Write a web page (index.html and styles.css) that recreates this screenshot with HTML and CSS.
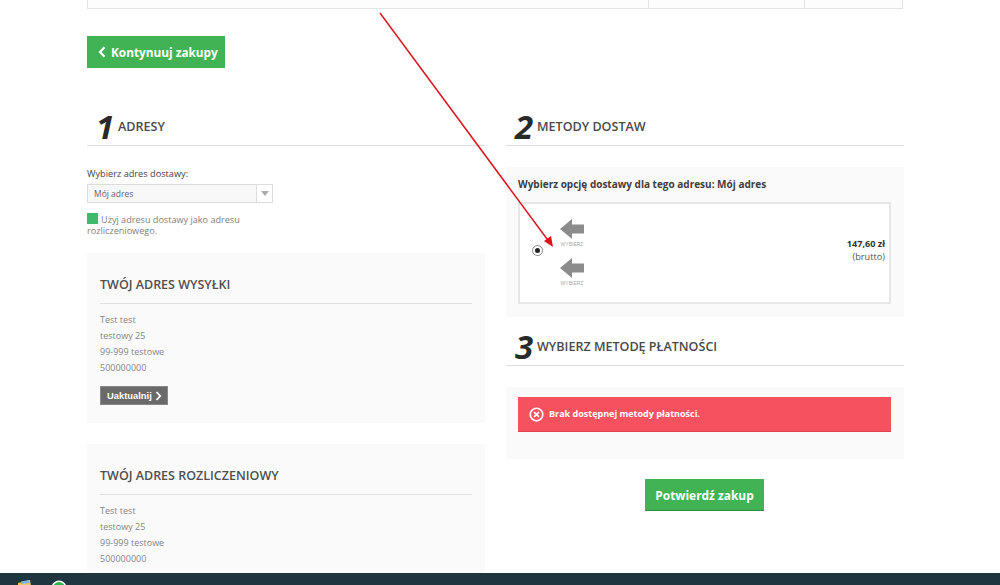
FILE: index.html
```html
<!DOCTYPE html>
<html lang="pl">
<head>
<meta charset="utf-8">
<title>Zamówienie</title>
<link rel="stylesheet" href="styles.css">
</head>
<body>
<div class="page">
  <div class="cart-end">
    <div class="cell cell-main"></div>
    <div class="cell cell-mid"></div>
    <div class="cell cell-last"></div>
  </div>
  <a class="btn-continue"><svg class="chev" viewBox="0 0 8 12" width="8" height="12"><path d="M6.500 1.200 2 6l4.500 4.800" fill="none" stroke="#fff" stroke-width="2.200"/></svg>Kontynuuj zakupy</a>
  <div class="columns">
    <div class="col">
      <h2 class="step"><span class="num">1</span>Adresy</h2>
      <label class="field-label">Wybierz adres dostawy:</label>
      <div class="select"><span class="select-text">Mój adres</span><span class="select-btn"><i class="caret"></i></span></div>
      <div class="same"><i class="check"></i>Użyj adresu dostawy jako adresu rozliczeniowego.</div>
      <section class="card first">
        <h3 class="card-title">Twój adres wysyłki</h3>
        <p class="line">Test test</p>
        <p class="line">testowy 25</p>
        <p class="line">99-999 testowe</p>
        <p class="line">500000000</p>
        <a class="btn-update">Uaktualnij<svg viewBox="0 0 7 10" width="7" height="10"><path d="M1.500 1 5.200 5 1.500 9" fill="none" stroke="#fff" stroke-width="1.800"/></svg></a>
      </section>
      <section class="card">
        <h3 class="card-title">Twój adres rozliczeniowy</h3>
        <p class="line">Test test</p>
        <p class="line">testowy 25</p>
        <p class="line">99-999 testowe</p>
        <p class="line">500000000</p>
      </section>
    </div>
    <div class="col">
      <h2 class="step"><span class="num">2</span>Metody dostaw</h2>
      <div class="panel delivery-panel">
        <div class="panel-title">Wybierz opcję dostawy dla tego adresu: Mój adres</div>
        <div class="option">
          <span class="radio"><i></i></span>
          <div class="carriers">
            <div class="carrier"><svg viewBox="0 0 24 20" width="24" height="20"><path d="M0 10 12 0v5.500h12v9H12V20z" fill="#8c8c8c"/></svg><span>WYBIERZ</span></div>
            <div class="carrier"><svg viewBox="0 0 24 20" width="24" height="20"><path d="M0 10 12 0v5.500h12v9H12V20z" fill="#8c8c8c"/></svg><span>WYBIERZ</span></div>
          </div>
          <div class="price"><b>147,60 zł</b><span>(brutto)</span></div>
        </div>
      </div>
      <h2 class="step step-3"><span class="num">3</span>Wybierz metodę płatności</h2>
      <div class="panel pay-panel">
        <div class="alert"><svg viewBox="0 0 16 16" width="15" height="15"><circle cx="8" cy="8" r="6.700" fill="none" stroke="#fff" stroke-width="1.800"/><path d="M5.400 5.400l5.200 5.200M10.600 5.400l-5.200 5.200" stroke="#fff" stroke-width="1.800"/></svg>Brak dostępnej metody płatności.</div>
      </div>
      <div class="confirm-wrap"><a class="btn-confirm">Potwierdź zakup</a></div>
    </div>
  </div>
</div>
<svg class="annotation" viewBox="0 0 1000 585" width="1000" height="585"><path d="M380 13 550 243" stroke="#d9181f" stroke-width="1.500" fill="none"/><path d="M553 247 544 241 551 236z" fill="#e0101a"/></svg>
<div class="taskbar">
  <svg class="tb-icon tb-files" viewBox="0 0 16 12" width="16" height="12"><path d="M1 3 13 0l2 12H1z" fill="#e8c66a"/><path d="M4 1.500 12 0l1 3-9 1z" fill="#7fb4de"/></svg>
  <svg class="tb-icon tb-app" viewBox="0 0 16 12" width="16" height="12"><circle cx="8" cy="8" r="7.500" fill="#fff"/><circle cx="8" cy="8" r="6" fill="#2bb24c"/></svg>
</div>
</body>
</html>
```
FILE: styles.css
```css
* { box-sizing: border-box; }
html, body { margin: 0; height: 585px; overflow: hidden; background: #fff; }
body { font-family: "Open Sans", "Liberation Sans", sans-serif; color: #777; font-size: 10px; position: relative; }
p, h2, h3 { margin: 0; }
.page { width: 816px; margin-left: 87px; }
.cart-end { display: flex; height: 9px; border: 1px solid #e3e3e3; border-top: 0; background: #fdfdfd; }
.cell-main { width: 561px; border-right: 1px solid #e3e3e3; }
.cell-mid { width: 156px; border-right: 1px solid #e3e3e3; }
.cell-last { flex: 1; }
.btn-continue { display: inline-flex; align-items: center; gap: 5px; height: 32px; width: 138px; margin-top: 27px; padding-left: 11px; background: #42b355; color: #fff; font-weight: 700; font-size: 11.800px; white-space: nowrap; }
.columns { display: grid; grid-template-columns: 398px 398px; column-gap: 21px; margin-top: 40px; }
.step { display: flex; align-items: center; height: 38px; border-bottom: 1px solid #dedede; font-size: 12.550px; font-weight: 600; text-transform: uppercase; color: #4a4a4a; }
.num { width: 31px; padding-left: 9px; font-size: 33px; line-height: 36px; font-style: italic; font-weight: 700; color: #2a2a2a; }
.field-label { display: block; margin-top: 21px; line-height: 14px; color: #444; font-size: 9.200px; }
.select { display: flex; width: 186px; height: 19px; margin-top: 3px; border: 1px solid #dcdcdc; background: #f8f8f8; }
.select-text { flex: 1; padding-left: 6px; font-size: 8.500px; line-height: 17px; color: #666; }
.select-btn { display: flex; align-items: center; justify-content: center; width: 16px; background: #fff; border-left: 1px solid #dcdcdc; }
.caret { width: 0; height: 0; border: 4px solid transparent; border-top: 5px solid #aaa; border-bottom: 0; }
.same { width: 186px; margin-top: 10px; font-size: 9.100px; line-height: 11px; color: #808080; }
.check { display: inline-block; width: 11px; height: 11px; margin-right: 3px; vertical-align: -1px; background: #3dbb6a; }
.card { padding: 21px 13px 18px 13px; background: #fafafa; margin-top: 21px; }
.card.first { margin-top: 17px; }
.card-title { height: 30px; border-bottom: 1px solid #e0e0e0; font-size: 12.500px; line-height: 22px; font-weight: 600; text-transform: uppercase; color: #505050; }
.card-title + .line { margin-top: 8px; }
.line { font-size: 9px; line-height: 16px; color: #858585; }
.btn-update { display: inline-flex; align-items: center; gap: 3px; height: 19px; margin-top: 10px; padding: 0 5px 0 6px; background: #6a6a6a; border: 1px solid #888; color: #fff; font: 700 9.400px/1 "Liberation Sans", Arial, sans-serif; }
.panel { background: #fafafa; padding: 0 12px; }
.delivery-panel { margin-top: 21px; height: 150px; padding-top: 10px; }
.panel-title { font-size: 10px; font-weight: 700; line-height: 14px; color: #3e3e3e; }
.option { display: flex; align-items: center; height: 102px; margin-top: 11px; margin-right: 1px; padding: 0 4px 0 12px; background: #fff; border: 2px solid #e6e6e6; }
.radio { display: flex; align-items: center; justify-content: center; width: 11px; height: 11px; margin-bottom: 6px; border: 1px solid #888; border-radius: 50%; }
.radio i { width: 5px; height: 5px; background: #222; border-radius: 50%; }
.carriers { display: flex; flex-direction: column; gap: 9px; margin-left: 16px; width: 26px; }
.carrier { display: flex; flex-direction: column; align-items: center; height: 30px; }
.carrier span { font: 5px/7px "Liberation Sans", Arial, sans-serif; color: #aaa; margin-top: 2px; }
.price { margin-left: auto; display: flex; flex-direction: column; align-items: flex-end; font-size: 9.200px; line-height: 13px; color: #555; margin-top: -6px; }
.price b { color: #333; font-size: 9.100px; }
.step-3 { margin-top: 11px; }
.pay-panel { margin-top: 21px; height: 72px; padding-top: 10px; }
.alert { display: flex; align-items: center; gap: 5px; height: 35px; margin-right: 1px; padding: 0 0 1px 11px; background: #f5515f; border-bottom: 1px solid #e0404d; color: #fff; font-size: 9px; font-weight: 700; }
.alert svg { margin-top: 2px; }
.confirm-wrap { display: flex; justify-content: center; margin-top: 20px; margin-left: -1px; }
.btn-confirm { display: flex; align-items: center; justify-content: center; width: 119px; height: 32px; background: #42b355; border-bottom: 1px solid #2f8f41; color: #fff; font-size: 11.900px; font-weight: 700; }
.annotation { position: absolute; left: 0; top: 0; pointer-events: none; }
.taskbar { position: absolute; left: 0; right: 0; bottom: 0; height: 12px; background: #1f3641; overflow: hidden; }
.tb-icon { position: absolute; top: 2px; }
.tb-files { left: 17px; top: 7px; }
.tb-app { left: 51px; top: 7px; }
```
